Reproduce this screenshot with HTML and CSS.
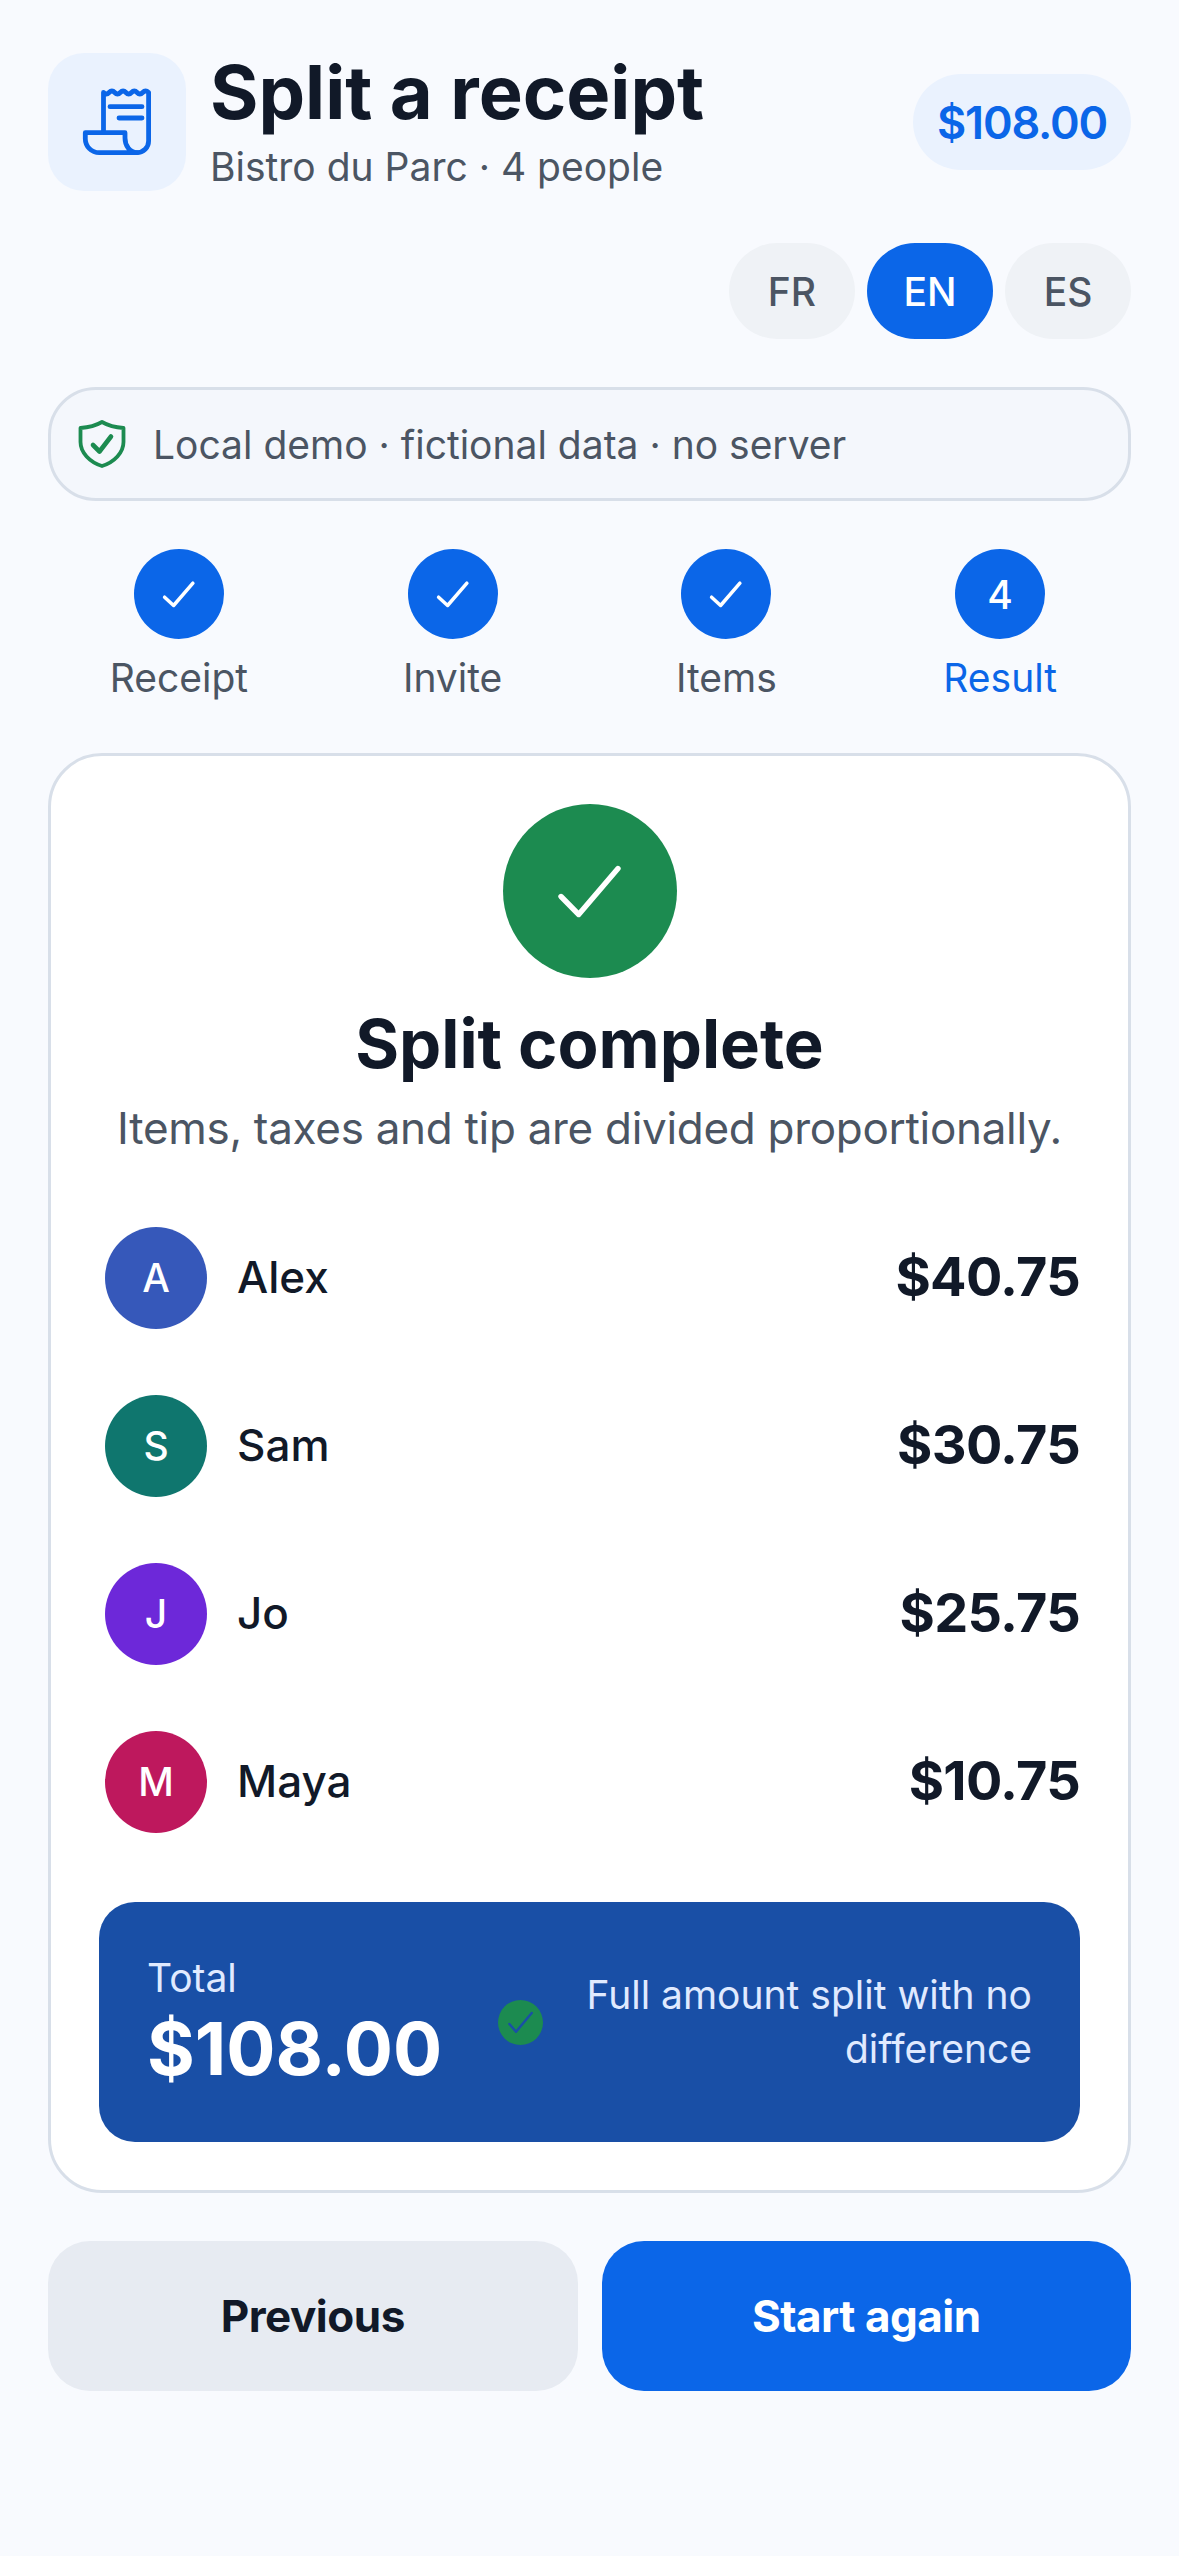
FILE: index.html
```html
<!DOCTYPE html>
<html lang="en">
<head>
<meta charset="UTF-8">
<meta name="viewport" content="width=device-width, initial-scale=1.0">
<title>Split a receipt</title>
<link rel="stylesheet" href="styles.css">
</head>
<body>

<div class="app">
  <header class="header">
    <div class="logo">
      <svg width="72" height="72" viewBox="0 0 72 72" fill="none" stroke="currentColor" stroke-width="4.8" stroke-linejoin="round" stroke-linecap="round">
        <path d="M22.500 46.700V6.500q2.800 3 5.600 0t5.600 0t5.600 0t5.600 0t5.600 0t5.600 0t5.600 0t5.900 0V55a11.700 11.700 0 0 1-11.700 11.700"/>
        <path d="M4.300 46.700H44V52c0 8 5 14.700 12 14.700H18.300a14 14 0 0 1-14-14z"/>
        <path d="M29 20.700H61M38 32H61"/>
      </svg>
    </div>
    <div class="header-text">
      <h1>Split a receipt</h1>
      <p>Bistro du Parc · 4 people</p>
    </div>
    <div class="price-chip">$108.00</div>
  </header>

  <div class="lang-row">
    <button class="lang">FR</button>
    <button class="lang active">EN</button>
    <button class="lang">ES</button>
  </div>

  <div class="notice">
    <svg width="48" height="48" viewBox="0 0 48 48" fill="none" stroke="#1c8b50" stroke-width="3.800" stroke-linejoin="round" stroke-linecap="round">
      <path d="M24 2C18 5.500 10 7.500 2.500 8V22c0 10.500 9 20 21.500 24C36.500 42 45.500 32.500 45.500 22V8C38 7.500 30 5.500 24 2z"/>
      <path d="M15 25l6.500 6.500L33 16.500" stroke-width="4.600"/>
    </svg>
    <span>Local demo · fictional data · no server</span>
  </div>

  <ol class="steps">
    <li class="step">
      <span class="step-dot"><svg width="36" height="36" viewBox="0 0 36 36" fill="none" stroke="#fff" stroke-width="3.500" stroke-linecap="round" stroke-linejoin="round"><path d="M3.600 21.200 12.600 29.500 31.900 7.200"/></svg></span>
      <span class="step-label">Receipt</span>
    </li>
    <li class="step">
      <span class="step-dot"><svg width="36" height="36" viewBox="0 0 36 36" fill="none" stroke="#fff" stroke-width="3.500" stroke-linecap="round" stroke-linejoin="round"><path d="M3.600 21.200 12.600 29.500 31.900 7.200"/></svg></span>
      <span class="step-label">Invite</span>
    </li>
    <li class="step">
      <span class="step-dot"><svg width="36" height="36" viewBox="0 0 36 36" fill="none" stroke="#fff" stroke-width="3.500" stroke-linecap="round" stroke-linejoin="round"><path d="M3.600 21.200 12.600 29.500 31.900 7.200"/></svg></span>
      <span class="step-label">Items</span>
    </li>
    <li class="step current">
      <span class="step-dot">4</span>
      <span class="step-label">Result</span>
    </li>
  </ol>

  <section class="card">
    <div class="done-mark">
      <svg width="72" height="72" viewBox="0 0 72 72" fill="none" stroke="#fff" stroke-width="5.400" stroke-linecap="round" stroke-linejoin="round"><path d="M7 41.500 24.700 59.500 64 13.500"/></svg>
    </div>
    <h2>Split complete</h2>
    <p class="card-sub">Items, taxes and tip are divided proportionally.</p>

    <div class="people">
      <div class="person">
        <span class="avatar alex">A</span>
        <span class="person-name">Alex</span>
        <span class="person-amount">$40.75</span>
      </div>
      <div class="person">
        <span class="avatar sam">S</span>
        <span class="person-name">Sam</span>
        <span class="person-amount">$30.75</span>
      </div>
      <div class="person">
        <span class="avatar jo">J</span>
        <span class="person-name">Jo</span>
        <span class="person-amount">$25.75</span>
      </div>
      <div class="person">
        <span class="avatar maya">M</span>
        <span class="person-name">Maya</span>
        <span class="person-amount">$10.75</span>
      </div>
    </div>

    <div class="total">
      <div class="total-left">
        <span class="total-label">Total</span>
        <span class="total-amount">$108.00</span>
      </div>
      <span class="total-check">
        <svg width="45" height="45" viewBox="0 0 45 45" fill="none" stroke="#194fa6" stroke-width="2.500" stroke-linecap="round" stroke-linejoin="round"><path d="M11.400 24 18 31.700 33.700 13"/></svg>
      </span>
      <p class="total-note">Full amount split with no difference</p>
    </div>
  </section>

  <div class="actions">
    <button class="btn btn-secondary">Previous</button>
    <button class="btn btn-primary">Start again</button>
  </div>
</div>

</body>
</html>
```

FILE: styles.css
```css
* {
  box-sizing: border-box;
}
body {
  margin: 0;
  background-color: #f8fafe;
  color: #111928;
  font-family: Inter, "Noto Sans", sans-serif;
}
button {
  font-family: inherit;
  border: none;
}
.app {
  width: 1179px;
  min-height: 2556px;
  padding: 48px;
}
.header {
  display: flex;
  align-items: center;
  gap: 24px;
  padding-top: 5px;
}
.logo {
  width: 138px;
  height: 138px;
  flex-shrink: 0;
  display: flex;
  align-items: center;
  justify-content: center;
  border-radius: 36px;
  background-color: #eaf2fe;
  color: #0b66e8;
}
.header-text {
  flex: 1;
}
.header-text h1 {
  margin: 0 0 12px;
  font-size: 74px;
  line-height: 78px;
  font-weight: 700;
}
.header-text p {
  margin: 0;
  font-size: 39px;
  line-height: 48px;
  color: #4b5563;
}
.price-chip {
  width: 218px;
  height: 96px;
  display: flex;
  align-items: center;
  justify-content: center;
  border-radius: 48px;
  background-color: #eaf2fe;
  color: #0b66e8;
  font-size: 45px;
  font-weight: 600;
  letter-spacing: -1.2px;
}
.lang-row {
  display: flex;
  justify-content: flex-end;
  gap: 12px;
  margin-top: 52px;
}
.lang {
  width: 126px;
  height: 96px;
  border-radius: 48px;
  background-color: #eff2f6;
  color: #4b5563;
  font-size: 39px;
  font-weight: 500;
}
.lang.active {
  background-color: #0b66e8;
  color: #fff;
}
.notice {
  display: flex;
  align-items: center;
  gap: 27px;
  height: 114px;
  margin-top: 48px;
  padding: 0 27px;
  border: 3px solid #d8dfe9;
  border-radius: 48px;
  background-color: #f4f7fc;
  color: #4b5563;
  font-size: 39px;
}
.steps {
  display: grid;
  grid-template-columns: repeat(4, 1fr);
  gap: 12px;
  margin: 48px 0 0;
  padding: 0;
  list-style: none;
}
.step {
  display: flex;
  flex-direction: column;
  align-items: center;
  gap: 12px;
}
.step-dot {
  width: 90px;
  height: 90px;
  display: flex;
  align-items: center;
  justify-content: center;
  border-radius: 50%;
  background-color: #0b66e8;
  color: #fff;
  font-size: 39px;
  font-weight: 500;
}
.step-label {
  font-size: 39px;
  line-height: 54px;
  color: #4b5563;
}
.step.current .step-label {
  color: #0b66e8;
}
.card {
  display: flex;
  flex-direction: column;
  align-items: center;
  margin-top: 48px;
  padding: 48px;
  border: 3px solid #d8dfe9;
  border-radius: 54px;
  background-color: #fff;
}
.done-mark {
  width: 174px;
  height: 174px;
  display: flex;
  align-items: center;
  justify-content: center;
  border-radius: 50%;
  background-color: #1c8b50;
}
.card h2 {
  margin: 24px 0 0;
  font-size: 67px;
  line-height: 84px;
  font-weight: 700;
}
.card-sub {
  margin: 12px 0 0;
  font-size: 44px;
  line-height: 60px;
  letter-spacing: -0.3px;
  color: #4b5563;
}
.people {
  align-self: stretch;
  margin-top: 36px;
}
.person {
  display: flex;
  align-items: center;
  gap: 30px;
  height: 168px;
  padding-left: 6px;
}
.avatar {
  width: 102px;
  height: 102px;
  padding-bottom: 2px;
  display: flex;
  align-items: center;
  justify-content: center;
  border-radius: 50%;
  color: #fff;
  font-size: 39px;
  font-weight: 500;
}
.avatar.alex { background-color: #3658ba; }
.avatar.sam { background-color: #0f766e; }
.avatar.jo { background-color: #6d28d9; }
.avatar.maya { background-color: #be185d; }
.person-name {
  flex: 1;
  margin-bottom: 3px;
  font-size: 44px;
  font-weight: 500;
}
.person-amount {
  margin-bottom: 3px;
  font-size: 54px;
  font-weight: 700;
  letter-spacing: -0.7px;
}
.total {
  align-self: stretch;
  display: flex;
  align-items: center;
  gap: 24px;
  height: 240px;
  margin-top: 36px;
  padding: 0 48px;
  border-radius: 36px;
  background-color: #194fa6;
  color: #fff;
}
.total-left {
  flex: 1;
  display: flex;
  flex-direction: column;
}
.total-label {
  font-size: 39px;
  line-height: 48px;
  color: #e0eaff;
}
.total-amount {
  margin-top: 5px;
  font-size: 73px;
  line-height: 84px;
  font-weight: 700;
}
.total-check {
  width: 45px;
  height: 45px;
  flex-shrink: 0;
  border-radius: 50%;
  background-color: #1c8b50;
}
.total-check svg {
  display: block;
}
.total-note {
  flex: 0 0 465px;
  margin: 0;
  text-align: right;
  font-size: 39px;
  line-height: 54px;
  color: #e0eaff;
}
.actions {
  display: grid;
  grid-template-columns: 1fr 1fr;
  gap: 24px;
  margin-top: 48px;
}
.btn {
  height: 150px;
  border-radius: 42px;
  font-size: 44px;
  font-weight: 700;
  letter-spacing: -0.5px;
}
.btn-secondary {
  background-color: #e7ebf2;
  color: #111928;
}
.btn-primary {
  background-color: #0b66e8;
  color: #fff;
}
```
